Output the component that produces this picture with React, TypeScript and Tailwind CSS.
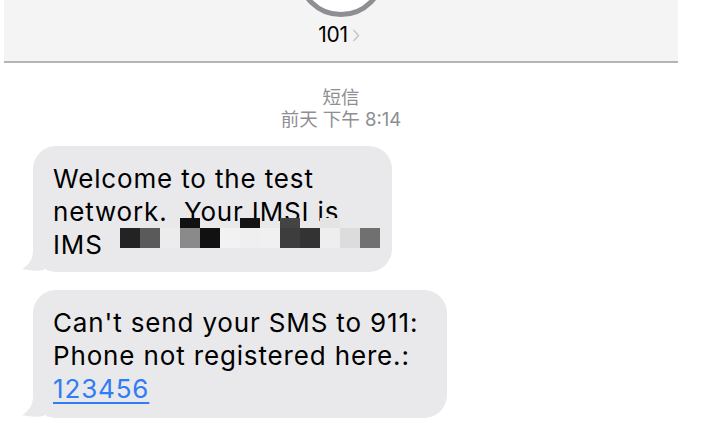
import React from "react";

const rowA: (string | null)[] = [null, null, null, "#111111", null, null, "#141414", null, "#444444", null, "#e4e4e4", null, null];
const rowB: string[] = [
  "#232323", "#5a5a5a", "#ececec", "#8a8a8a", "#111111", "#f2f2f2", "#efefef",
  "#f0f0f0", "#3d3d3d", "#333333", "#eeeeee", "#dcdcdc", "#707070",
];

function Tail() {
  return (
    <svg
      className="absolute left-[-11px] bottom-0"
      width="24"
      height="22"
      viewBox="0 0 24 22"
    >
      <path d="M11 0 L22 0 L22 20 C16 21 9 21 0 19 C7 15 11 9 11 0 Z" fill="#e9e9eb" />
    </svg>
  );
}

function Mosaic() {
  return (
    <div className="absolute left-[87px] top-[72px]">
      <div className="flex h-[10px]">
        {rowA.map((c, i) => (
          <div key={i} className="w-[20px] h-full" style={{ background: c ?? "transparent" }} />
        ))}
      </div>
      <div className="flex h-[20px]">
        {rowB.map((c, i) => (
          <div key={i} className="w-[20px] h-full" style={{ background: c }} />
        ))}
      </div>
    </div>
  );
}

export default function App() {
  return (
    <div className="w-[722px] h-[438px] bg-white overflow-hidden font-['Inter','Noto_Sans_CJK_SC',sans-serif]">
      <div className="ml-[4px] w-[674px]">
        <div className="relative h-[61px] bg-[#f4f4f4] overflow-hidden">
          <div className="absolute left-1/2 -translate-x-1/2 top-[-72px] w-[89px] h-[89px] rounded-full bg-white border-[5px] border-[#8e8e93]" />
          <div className="absolute inset-x-0 top-[24px] flex items-center justify-center gap-[4px] pr-[4px]">
            <span className="text-[21px] leading-[22px] text-black tracking-[-0.3px]">101</span>
            <svg width="8" height="13" viewBox="0 0 8 13">
              <path d="M1.5 1 L6.5 6.5 L1.5 12" fill="none" stroke="#c2c2c4" strokeWidth="1.3" />
            </svg>
          </div>
        </div>
        <div className="h-[2px] bg-[#b5b5b5]" />
        <div className="flex flex-col items-center mt-[23px] text-[#8e8e93] text-[18.5px] leading-[22px]">
          <span>短信</span>
          <span>前天 下午 8:14</span>
        </div>
      </div>

      <div className="ml-[33px] mt-[16px] flex flex-col items-start gap-[18px] text-[26px] leading-[33px] tracking-[0.85px] text-black">
        <div className="relative w-[359px] h-[126px] bg-[#e9e9eb] rounded-[23px] px-[20px] pt-[16px]">
          <Tail />
          <p className="relative">
            Welcome to the test
            <br />
            network.&nbsp; Your IMSI is
            <br />
            IMS
          </p>
          <Mosaic />
        </div>
        <div className="relative w-[414px] h-[128px] bg-[#e9e9eb] rounded-[23px] px-[20px] pt-[16px]">
          <Tail />
          <p className="relative">
            Can't send your SMS to 911:
            <br />
            Phone not registered here.:
            <br />
            <span className="text-[#2f7cf6] underline decoration-[1.5px] underline-offset-[4px]">123456</span>
          </p>
        </div>
      </div>
    </div>
  );
}
